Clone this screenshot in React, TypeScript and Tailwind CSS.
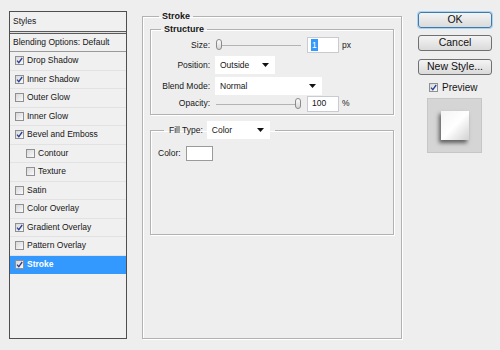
import React from "react";

// Photoshop "Layer Style" dialog, Stroke page

const styles: { label: string; on: boolean; indent?: boolean; active?: boolean }[] = [
  { label: "Drop Shadow", on: true },
  { label: "Inner Shadow", on: true },
  { label: "Outer Glow", on: false },
  { label: "Inner Glow", on: false },
  { label: "Bevel and Emboss", on: true },
  { label: "Contour", on: false, indent: true },
  { label: "Texture", on: false, indent: true },
  { label: "Satin", on: false },
  { label: "Color Overlay", on: false },
  { label: "Gradient Overlay", on: true },
  { label: "Pattern Overlay", on: false },
  { label: "Stroke", on: true, active: true },
];

function Check({ on }: { on: boolean }) {
  return (
    <span className="w-[9px] h-[9px] shrink-0 border border-[#8f9093] bg-linear-to-br from-[#d8d8d8] to-[#fafafa] flex items-center justify-center">
      {on && (
        <svg width="7" height="7" viewBox="0 0 7 7">
          <path d="M1 3.6 L2.8 5.6 L6.2 1" stroke="#2b3f92" strokeWidth="1.3" fill="none" />
        </svg>
      )}
    </span>
  );
}

function Select({ value, width }: { value: string; width: string }) {
  return (
    <div className={`h-[18px] bg-white flex items-center justify-between pl-[5px] pr-[6px] ${width}`}>
      <span>{value}</span>
      <svg width="7" height="4" viewBox="0 0 7 4">
        <path d="M0 0 H7 L3.5 4 Z" fill="#111" />
      </svg>
    </div>
  );
}

function Slider({ pos }: { pos: number }) {
  return (
    <div className="relative w-[85px] h-[12px]">
      <div className="absolute left-0 right-0 top-[6px] h-px bg-[#b4b4b4]" />
      <div
        className="absolute top-0 w-[6px] h-[11px] rounded-[3px] border border-[#8a8a8a] bg-linear-to-b from-[#fdfdfd] to-[#d6d6d6]"
        style={{ left: pos }}
      />
    </div>
  );
}

function Button({ label, primary }: { label: string; primary?: boolean }) {
  return (
    <div
      className={`w-[74px] h-[16px] rounded-[3px] border flex items-center justify-center text-[10.5px] text-[#111] bg-linear-to-b from-[#f4f4f4] to-[#dadada] ${
        primary ? "border-[#3d7bad] shadow-[0_0_0_1px_#a9d3f0]" : "border-[#707070]"
      }`}
    >
      {label}
    </div>
  );
}

export default function App() {
  return (
    <div
      className="w-[500px] h-[350px] bg-[#eeeeee] flex items-start pl-[9px] pt-[11px] text-[8.5px] text-[#151515] overflow-hidden"
      style={{ fontFamily: '"Liberation Sans", Arial, sans-serif' }}
    >
      {/* styles list */}
      <div className="w-[118px] h-[328px] border border-[#4e4e4e] bg-[#f0f0f0] flex flex-col">
        <div className="h-[19px] flex items-center pl-[3px]">Styles</div>
        <div className="h-[3px] border-y border-[#5a5a5a] bg-[#e0e0e0]" />
        <div className="h-[18px] flex items-center pl-[3px] border-b border-[#9a9a9a]">Blending Options: Default</div>
        {styles.map((s) => (
          <div
            key={s.label}
            className={`h-[18.5px] flex items-center gap-[3px] border-b ${s.indent ? "pl-[16px]" : "pl-[5px]"} ${
              s.active ? "bg-[#3399ff] border-[#3399ff] text-white font-bold" : "border-[#e2e2e2]"
            }`}
          >
            <Check on={s.on} />
            <span>{s.label}</span>
          </div>
        ))}
      </div>

      {/* stroke page */}
      <fieldset className="ml-[15px] w-[260px] h-[328px] border border-[#b2b2b2] shadow-[inset_1px_1px_0_#fff,1px_1px_0_#fff] px-[7px]">
        <legend className="ml-[9px] px-[3px] font-bold text-[9px] leading-[11px]">Stroke</legend>

        <fieldset className="mt-[2px] h-[91px] border border-[#b2b2b2] shadow-[inset_1px_1px_0_#fff,1px_1px_0_#fff]">
          <legend className="ml-[10px] px-[3px] font-bold text-[9px] leading-[11px]">Structure</legend>
          <div className="flex items-center h-[18px] mt-[1px]">
            <span className="w-[59px] text-right">Size:</span>
            <div className="ml-[6px]"><Slider pos={0} /></div>
            <div className="ml-[6px] w-[32px] h-[16px] bg-white border border-[#c8ccd2] flex items-center pl-[3px]">
              <span className="bg-[#3399ff] text-white px-[1px]">1</span>
            </div>
            <span className="ml-[3px]">px</span>
          </div>
          <div className="flex items-center h-[18px] mt-[2px]">
            <span className="w-[59px] text-right">Position:</span>
            <div className="ml-[5px]"><Select value="Outside" width="w-[60px]" /></div>
          </div>
          <div className="flex items-center h-[18px] mt-[3px]">
            <span className="w-[59px] text-right">Blend Mode:</span>
            <div className="ml-[5px]"><Select value="Normal" width="w-[107px]" /></div>
          </div>
          <div className="flex items-center h-[17px]">
            <span className="w-[59px] text-right">Opacity:</span>
            <div className="ml-[6px]"><Slider pos={79} /></div>
            <div className="ml-[6px] w-[32px] h-[16px] bg-white border border-[#c8ccd2] flex items-center pl-[4px]">100</div>
            <span className="ml-[3px]">%</span>
          </div>
        </fieldset>

        <fieldset className="mt-[6px] h-[114px] border border-[#b2b2b2] shadow-[inset_1px_1px_0_#fff,1px_1px_0_#fff] pl-[7px]">
          <legend className="ml-[6px] px-[5px] flex items-center gap-[4px]">
            <span>Fill Type:</span>
            <Select value="Color" width="w-[63px]" />
          </legend>
          <div className="flex items-center gap-[5px] mt-[7px]">
            <span>Color:</span>
            <div className="w-[27px] h-[15px] bg-white border border-[#9a9a9a]" />
          </div>
        </fieldset>
      </fieldset>

      {/* buttons */}
      <div className="ml-[16px] mt-[1px] w-[74px] flex flex-col">
        <Button label="OK" primary />
        <div className="mt-[7px]"><Button label="Cancel" /></div>
        <div className="mt-[8px]"><Button label="New Style..." /></div>
        <div className="mt-[6px] h-[12px] flex items-center gap-[4px] pl-[11px] text-[10px]">
          <Check on />
          <span>Preview</span>
        </div>
        <div className="mt-[5px] ml-[9px] w-[55px] h-[55px] bg-[#d5d5d5] border border-[#c6c6c6] flex items-center justify-center">
          <div className="w-[28px] h-[29px] bg-linear-to-br from-[#f4f4f4] via-[#ffffff] to-[#d2d2d2] shadow-[-2px_3px_4px_rgba(0,0,0,0.55)]" />
        </div>
      </div>
    </div>
  );
}
